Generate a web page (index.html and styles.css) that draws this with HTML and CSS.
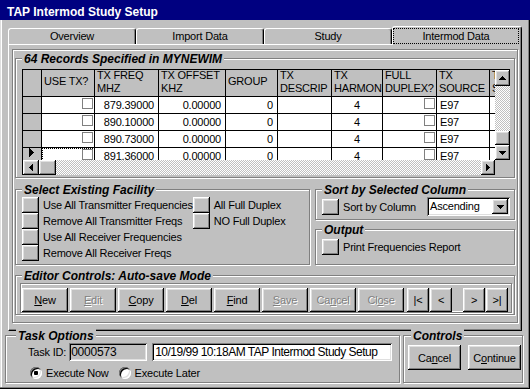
FILE: index.html
```html
<!DOCTYPE html>
<html>
	<head>
		<meta charset="utf-8">
		<title>TAP Intermod Study Setup</title>
		<link rel="stylesheet" href="styles.css">
	</head>
	<body>
		<div class="window">
			<div class="titlebar">TAP Intermod Study Setup</div>
			<div class="client">
				<!--选项卡-->
				<div class="tabs">
					<div class="tab">Overview</div>
					<div class="tab">Import Data</div>
					<div class="tab">Study</div>
					<div class="tab active"><span class="focus">Intermod Data</span></div>
				</div>
				<div class="tabpanel">
					<div class="page">
						<!--记录表格-->
						<div class="group records">
							<div class="legend">64 Records Specified in MYNEWIM</div>
							<div class="grid">
								<div class="grid-main">
									<div class="grid-view">
										<div class="sheet">
											<div class="hd"></div>
											<div class="hd">USE TX?</div>
											<div class="hd">TX FREQ<br>MHZ</div>
											<div class="hd">TX OFFSET<br>KHZ</div>
											<div class="hd">GROUP</div>
											<div class="hd">TX<br>DESCRIP</div>
											<div class="hd">TX<br>HARMON</div>
											<div class="hd">FULL<br>DUPLEX?</div>
											<div class="hd">TX<br>SOURCE</div>
											<div class="hd">TX<br>S</div>

											<div class="rh"></div>
											<div class="chk"><span class="box"></span></div>
											<div class="num">879.39000</div>
											<div class="num">0.00000</div>
											<div class="num">0</div>
											<div></div>
											<div class="mid">4</div>
											<div class="chk"><span class="box"></span></div>
											<div>E97</div>
											<div></div>

											<div class="rh"></div>
											<div class="chk"><span class="box"></span></div>
											<div class="num">890.10000</div>
											<div class="num">0.00000</div>
											<div class="num">0</div>
											<div></div>
											<div class="mid">4</div>
											<div class="chk"><span class="box"></span></div>
											<div>E97</div>
											<div></div>

											<div class="rh"></div>
											<div class="chk"><span class="box"></span></div>
											<div class="num">890.73000</div>
											<div class="num">0.00000</div>
											<div class="num">0</div>
											<div></div>
											<div class="mid">4</div>
											<div class="chk"><span class="box"></span></div>
											<div>E97</div>
											<div></div>

											<div class="rh"><svg class="ptr" width="5" height="9" viewBox="0 0 5 9"><path d="M0 0h1v9H0zM1 1h1v7H1zM2 2h1v5H2zM3 3h1v3H3zM4 4h1v1H4z"/></svg></div>
											<div class="chk cur"><span class="box"></span></div>
											<div class="num">891.36000</div>
											<div class="num">0.00000</div>
											<div class="num">0</div>
											<div></div>
											<div class="mid">4</div>
											<div class="chk"><span class="box"></span></div>
											<div>E97</div>
											<div></div>
										</div>
									</div>
									<div class="vscroll">
										<div class="sb-btn raised up"><svg width="7" height="4" viewBox="0 0 7 4"><path d="M3 0h1v1H3zM2 1h3v1H2zM1 2h5v1H1zM0 3h7v1H0z"/></svg></div>
										<div class="track"></div>
										<div class="thumb raised"></div>
										<div class="sb-btn raised down"><svg width="7" height="4" viewBox="0 0 7 4"><path d="M0 0h7v1H0zM1 1h5v1H1zM2 2h3v1H2zM3 3h1v1H3z"/></svg></div>
									</div>
								</div>
								<div class="hscroll">
									<div class="sb-btn raised left"><svg width="4" height="7" viewBox="0 0 4 7"><path d="M3 0h1v7H3zM2 1h1v5H2zM1 2h1v3H1zM0 3h1v1H0z"/></svg></div>
									<div class="thumb raised"></div>
									<div class="track"></div>
									<div class="sb-btn raised right"><svg width="4" height="7" viewBox="0 0 4 7"><path d="M0 0h1v7H0zM1 1h1v5H1zM2 2h1v3H2zM3 3h1v1H3z"/></svg></div>
									<div class="corner"></div>
								</div>
							</div>
						</div>

						<div class="midrow">
							<div class="group facility">
								<div class="legend">Select Existing Facility</div>
								<div class="fac-cols">
									<div class="fac-col">
										<div class="opt"><span class="sq raised"></span>Use All Transmitter Frequencies</div>
										<div class="opt"><span class="sq raised"></span>Remove All Transmitter Freqs</div>
										<div class="opt"><span class="sq raised"></span>Use All Receiver Frequencies</div>
										<div class="opt"><span class="sq raised"></span>Remove All Receiver Freqs</div>
									</div>
									<div class="fac-col">
										<div class="opt"><span class="sq raised"></span>All Full Duplex</div>
										<div class="opt"><span class="sq raised"></span>NO Full Duplex</div>
									</div>
								</div>
							</div>
							<div class="rightcol">
								<div class="group sort">
									<div class="legend">Sort by Selected Column</div>
									<div class="sort-row">
										<span class="sq raised"></span>Sort by Column
										<div class="combo sunken">
											<span class="combo-text">Ascending</span>
											<div class="sb-btn raised"><svg width="7" height="4" viewBox="0 0 7 4"><path d="M0 0h7v1H0zM1 1h5v1H1zM2 2h3v1H2zM3 3h1v1H3z"/></svg></div>
										</div>
									</div>
								</div>
								<div class="group output">
									<div class="legend">Output</div>
									<div class="opt"><span class="sq raised"></span>Print Frequencies Report</div>
								</div>
							</div>
						</div>

						<!--编辑按钮-->
						<div class="group editor">
							<div class="legend">Editor Controls: Auto-save Mode</div>
							<div class="toolbar">
								<div class="tb raised"><u>N</u>ew</div>
								<div class="tb raised off"><u>E</u>dit</div>
								<div class="tb raised"><u>C</u>opy</div>
								<div class="tb raised"><u>D</u>el</div>
								<div class="tb raised"><u>F</u>ind</div>
								<div class="tb raised off"><u>S</u>ave</div>
								<div class="tb raised off">Ca<u>n</u>cel</div>
								<div class="tb raised off">Cl<u>o</u>se</div>
								<div class="tb nav first raised">|&lt;</div>
								<div class="tb nav prev raised">&lt;</div>
								<div class="slot"></div>
								<div class="tb nav raised">&gt;</div>
								<div class="tb nav raised">&gt;|</div>
							</div>
						</div>
					</div>
				</div>

				<div class="bottomrow">
					<div class="group task">
						<div class="legend">Task Options</div>
						<div class="task-row">
							<span class="lbl">Task ID:</span>
							<div class="field idfield sunken">0000573</div>
							<div class="field descfield sunken">10/19/99 10:18AM TAP Intermod Study Setup</div>
						</div>
						<div class="radios">
							<div class="radio-opt"><span class="radio on"></span>Execute Now</div>
							<div class="radio-opt"><span class="radio"></span>Execute Later</div>
						</div>
					</div>
					<div class="group controls">
						<div class="legend">Controls</div>
						<div class="ctl-row">
							<div class="ctl raised">Ca<u>n</u>cel</div>
							<div class="ctl raised">C<u>o</u>ntinue</div>
						</div>
					</div>
				</div>
			</div>
		</div>
	</body>
</html>
```

FILE: styles.css
```css
*{
	margin: 0;
	padding: 0;
	box-sizing: border-box;
}
body{
	background-color: #c0c0c0;
	font-family: "Liberation Sans", Arial, sans-serif;
	font-size: 11px;
	color: #000;
}
.window{
	width: 530px;
	height: 389px;
	overflow: hidden;
	background-color: #c0c0c0;
	box-shadow: inset -1px -1px #000, inset -2px -2px #808080, inset 1px 1px #dfdfdf, inset 2px 2px #fff;
	letter-spacing: -0.2px;
}
.titlebar{
	height: 20px;
	padding: 5px 0 0 7px;
	background-color: #000080;
	color: #fff;
	font-size: 12px;
	font-weight: bold;
	line-height: 15px;
	letter-spacing: 0;
}
.client{
	padding: 6px 8px 0;
}

/* 立体效果 */
.raised{
	background-color: #c0c0c0;
	box-shadow: inset -1px -1px #000, inset 1px 1px #fff, inset -2px -2px #808080, inset 2px 2px #dfdfdf;
}
.sunken{
	box-shadow: inset 1px 1px #808080, inset -1px -1px #fff, inset 2px 2px #000, inset -2px -2px #dfdfdf;
}

/* 选项卡 */
.tabs{
	display: flex;
	align-items: flex-end;
	height: 18px;
}
.tab{
	flex: 1;
	height: 16px;
	border: 1px solid #fff;
	border-right-color: #000;
	border-bottom: 0;
	border-radius: 3px 3px 0 0;
	box-shadow: inset -1px 0 #808080;
	text-align: center;
	line-height: 15px;
}
.tab.active{
	height: 19px;
	margin-bottom: -1px;
	position: relative;
	z-index: 1;
	background-color: #c0c0c0;
	padding: 1px 2px 0 0;
}
.focus{
	display: block;
	height: 16px;
	border: 1px dotted #000;
	line-height: 14px;
}
.tabpanel{
	height: 287px;
	border: 1px solid;
	border-color: #fff #000 #000 #fff;
	box-shadow: inset -1px -1px #808080;
	padding: 4px 3px 0;
}
.page{
	height: 274px;
	border: 1px solid #808080;
	box-shadow: inset 1px 1px #fff, 1px 1px #fff;
	padding: 0 2px;
}

/* 分组框 */
.group{
	border: 1px solid #808080;
	box-shadow: inset 1px 1px #fff, 1px 1px #fff;
}
.legend{
	width: fit-content;
	margin: -7px 0 0 0;
	padding: 0 2px;
	background-color: #c0c0c0;
	font-size: 12px;
	font-weight: bold;
	font-style: italic;
	line-height: 14px;
	letter-spacing: 0;
	white-space: nowrap;
}
.records{
	margin-top: 8px;
	padding: 0 3px 2px 6px;
}

/* 表格 */
.grid{
	width: 488px;
	margin-top: 3px;
	border-top: 1px solid #000;
	border-left: 1px solid #000;
}
.grid-main{
	display: flex;
	height: 90px;
}
.grid-view{
	flex: 1;
	overflow: hidden;
}
.sheet{
	display: grid;
	grid-template-columns: 19px 53px 64px 67px 52px 54px 51px 54px 53px 40px;
	grid-template-rows: 27px;
	grid-auto-rows: 17px;
	width: 507px;
}
.sheet > div{
	border-right: 1px solid #000;
	border-bottom: 1px solid #000;
	background-color: #fff;
	padding: 0 3px;
	line-height: 16px;
	white-space: nowrap;
	overflow: hidden;
}
.sheet > .hd{
	display: flex;
	align-items: center;
	background-color: #c0c0c0;
	padding: 0 0 3px 2px;
	line-height: 13px;
}
.sheet > .rh{
	background-color: #c0c0c0;
	padding: 0 0 0 6px;
}
.sheet > .num{
	text-align: right;
	padding-right: 4px;
}
.sheet > .mid{
	text-align: center;
}
.sheet > .chk{
	text-align: right;
	padding-right: 1px;
}
.sheet > .cur{
	outline: 1px dotted #000;
	outline-offset: -1px;
}
.box{
	display: inline-block;
	width: 11px;
	height: 11px;
	margin-top: 1px;
	border: 1px solid #808080;
	background-color: #fff;
	vertical-align: top;
}
.ptr{
	display: block;
}

/* 滚动条 */
.sb-btn{
	display: flex;
	align-items: center;
	justify-content: center;
	flex: none;
}
.sb-btn svg{
	display: block;
}
.track{
	flex: 1;
	background: repeating-conic-gradient(#c0c0c0 0 25%, #fff 0 50%) 0 0 / 2px 2px;
}
.vscroll{
	width: 15px;
	display: flex;
	flex-direction: column;
}
.vscroll .up{
	height: 16px;
}
.vscroll .down{
	height: 15px;
}
.vscroll .thumb{
	height: 14px;
}
.hscroll{
	display: flex;
	height: 15px;
}
.hscroll .left{
	width: 16px;
}
.hscroll .right{
	width: 14px;
}
.hscroll .thumb{
	width: 17px;
}
.corner{
	width: 15px;
	background-color: #c0c0c0;
}

/* 中间一行 */
.midrow{
	display: flex;
	gap: 5px;
	margin-top: 11px;
}
.facility{
	width: 295px;
	padding: 0 0 3px 6px;
}
.fac-cols{
	display: flex;
}
.fac-col{
	width: 181px;
}
.opt{
	display: flex;
	align-items: center;
	gap: 4px;
	height: 16px;
	white-space: nowrap;
}
.sq{
	width: 17px;
	height: 16px;
	flex: none;
}
.rightcol{
	flex: 1;
	display: flex;
	flex-direction: column;
}
.sort{
	padding: 0 4px 3px 6px;
}
.sort-row{
	display: flex;
	align-items: center;
	gap: 4px;
	height: 19px;
	white-space: nowrap;
}
.combo{
	display: flex;
	align-items: center;
	width: 83px;
	height: 19px;
	margin-left: auto;
	padding: 2px;
	background-color: #fff;
}
.combo-text{
	flex: 1;
	padding-left: 1px;
	line-height: 15px;
}
.combo .sb-btn{
	width: 16px;
	height: 15px;
}
.output{
	flex: 1;
	margin-top: 9px;
	padding-left: 6px;
}
.output .opt{
	margin-top: 2px;
}

/* 编辑按钮 */
.editor{
	margin-top: 10px;
	padding: 0 2px 1px 4px;
}
.editor .legend{
	margin-left: 2px;
}
.toolbar{
	display: flex;
	padding: 4px 1px 0;
	border: 1px solid #808080;
	box-shadow: inset 1px 1px #fff, 1px 1px #fff;
}
.tb{
	display: flex;
	align-items: center;
	justify-content: center;
	width: 46px;
	height: 24px;
	margin-right: 2px;
}
.tb.off{
	color: #808080;
	text-shadow: 1px 1px 0 #fff;
}
.tb.nav{
	width: 22px;
	margin-right: 1px;
}
.tb.first{
	margin-left: 1px;
}
.tb.prev{
	margin-right: 0;
}
.slot{
	width: 11px;
	height: 24px;
	border-bottom: 1px solid #fff;
}

/* 底部 */
.bottomrow{
	display: flex;
	margin: 4px -1px 0 -3px;
}
.task{
	width: 395px;
	height: 48px;
	padding: 0 3px 1px 22px;
}
.task .legend{
	margin-left: -12px;
}
.task-row{
	display: flex;
	align-items: center;
	height: 18px;
	white-space: nowrap;
}
.lbl{
	margin-right: 3px;
}
.field{
	height: 18px;
	padding-left: 2px;
	line-height: 18px;
	overflow: hidden;
}
.idfield{
	width: 78px;
	background-color: #c0c0c0;
	font-size: 12px;
}
.descfield{
	width: 240px;
	margin-left: 5px;
	background-color: #fff;
	padding-left: 3px;
	font-size: 12px;
	letter-spacing: -0.5px;
}
.radios{
	display: flex;
	align-items: center;
	height: 16px;
	margin: 4px 0 0 2px;
}
.radio-opt{
	display: flex;
	align-items: center;
	gap: 4px;
	white-space: nowrap;
}
.radio-opt + .radio-opt{
	margin-left: 10px;
}
.radio{
	width: 12px;
	height: 12px;
	border-radius: 50%;
	background-color: #fff;
	box-shadow: inset 1px 1px #808080, inset -1px -1px #fff, inset 2px 2px #000, inset -2px -2px #dfdfdf;
}
.radio.on{
	background: radial-gradient(circle, #000 0 2px, #fff 2.5px);
}
.controls{
	flex: 1;
	height: 48px;
	margin-left: 3px;
	padding-left: 4px;
}
.controls .legend{
	margin-left: 3px;
}
.ctl-row{
	display: flex;
	gap: 7px;
	margin-top: 2px;
}
.ctl{
	display: flex;
	align-items: center;
	justify-content: center;
	width: 53px;
	height: 25px;
}
```
